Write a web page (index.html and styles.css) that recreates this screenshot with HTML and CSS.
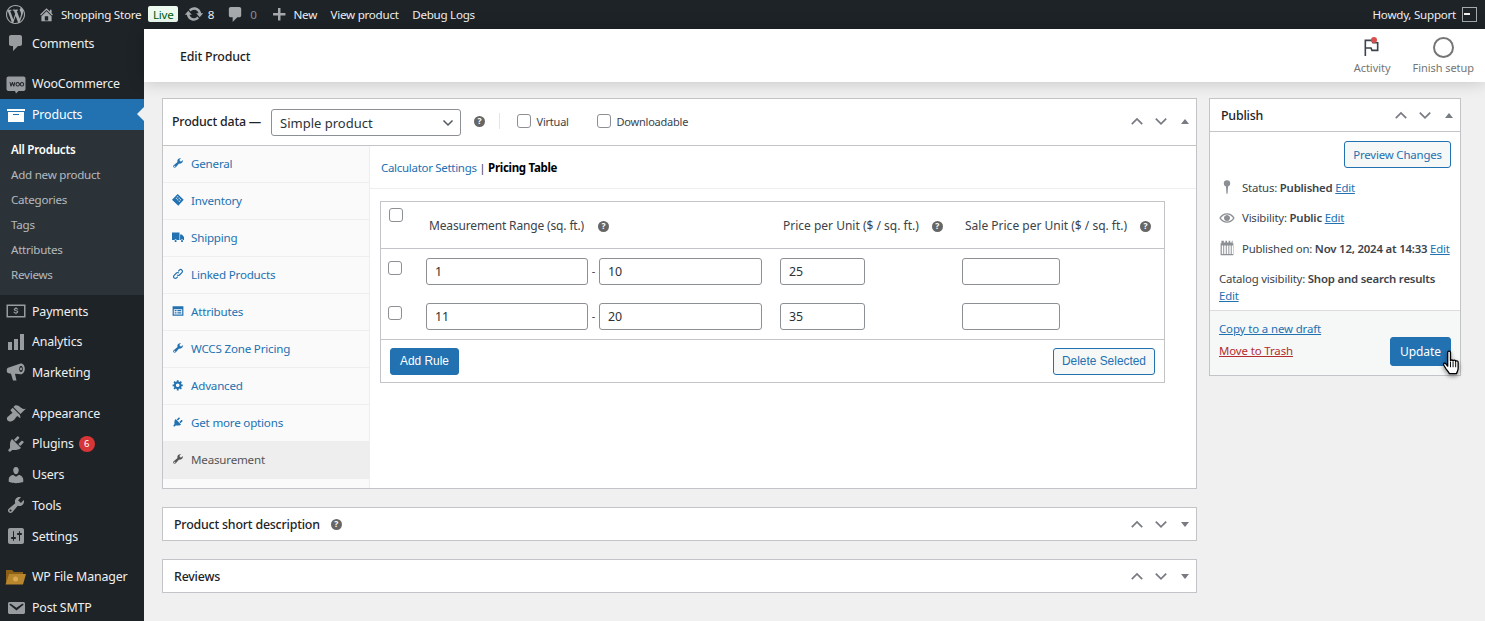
FILE: index.html
```html
<!DOCTYPE html>
<html lang="en">
<head>
<meta charset="utf-8">
<title>Edit Product</title>
<link rel="stylesheet" href="styles.css">
</head>
<body>
<svg class="defs" width="0" height="0" aria-hidden="true">
  <defs>
    <symbol id="i-wp" viewBox="0 0 20 20"><path d="M20 10c0-5.51-4.49-10-10-10C4.48 0 0 4.49 0 10c0 5.52 4.48 10 10 10 5.51 0 10-4.48 10-10zM7.78 15.37L4.37 6.22c.55-.02 1.17-.08 1.17-.08.5-.06.44-1.13-.06-1.11 0 0-1.45.11-2.37.11-.18 0-.37 0-.58-.01C4.12 2.69 6.87 1.11 10 1.11c2.33 0 4.45.87 6.05 2.34-.68-.11-1.65.39-1.65 1.58 0 .74.45 1.36.9 2.1.35.61.55 1.36.55 2.46 0 1.49-1.4 5-1.4 5l-3.03-8.37c.54-.02.82-.17.82-.17.5-.05.44-1.25-.06-1.22 0 0-1.44.12-2.38.12-.87 0-2.33-.12-2.33-.12-.5-.03-.56 1.2-.06 1.22l.92.08 1.26 3.41zM17.41 10c.24-.64.74-1.87.43-4.25.7 1.29 1.05 2.71 1.05 4.25 0 3.29-1.73 6.24-4.4 7.78.97-2.59 1.94-5.2 2.92-7.78zM6.1 18.09C3.12 16.65 1.11 13.53 1.11 10c0-1.3.23-2.48.72-3.59C3.25 10.3 4.67 14.2 6.1 18.09zm4.03-6.63l2.58 6.98c-.86.29-1.76.45-2.71.45-.79 0-1.57-.11-2.29-.33.81-2.38 1.62-4.74 2.42-7.1z"/></symbol>
    <symbol id="i-home" viewBox="0 0 20 20"><path d="M16 8.5l1.53 1.53-1.06 1.06L10 4.62l-6.47 6.47-1.06-1.06L10 2.5l4 4v-2h2v4zm-6-2.46l6 5.99V18H4v-5.97zM12 17v-5H8v5h4z"/></symbol>
    <symbol id="i-update" viewBox="0 0 20 20"><path d="M10.2 3.28c3.53 0 6.43 2.61 6.92 6h2.08l-3.5 4-3.5-4h2.32c-.45-1.97-2.21-3.45-4.32-3.45-1.45 0-2.73.71-3.54 1.78L4.95 5.66C6.23 4.2 8.11 3.28 10.2 3.28zm-.4 13.44c-3.52 0-6.43-2.61-6.92-6H.8l3.5-4c1.17 1.33 2.33 2.67 3.5 4H5.48c.45 1.97 2.21 3.45 4.32 3.45 1.45 0 2.73-.71 3.54-1.78l1.71 1.95c-1.28 1.46-3.15 2.38-5.25 2.38z"/></symbol>
    <symbol id="i-comment" viewBox="0 0 20 20"><path d="M5 2h9c1.1 0 2 .9 2 2v7c0 1.1-.9 2-2 2h-2l-5 5v-5H5c-1.1 0-2-.9-2-2V4c0-1.1.9-2 2-2z"/></symbol>
    <symbol id="i-plus" viewBox="0 0 20 20"><path d="M17.500 8.500v3h-6v6h-3v-6h-6v-3h6v-6h3v6z"/></symbol>
    <symbol id="i-woo" viewBox="0 0 20 20"><path d="M2.5 2.5h15c1.1 0 2 .9 2 2v10.500c0 1.100-.9 2-2 2h-5l-2.500 2.500-1-2.500h-6.500c-1.100 0-2-.9-2-2v-10.500c0-1.100.9-2 2-2zM3.500 8l1 4.500h.9l1-2.500 1 2.500h.9l1-4.500h-.9l-.6 2.800-1-2.800h-.8l-1 2.800-.6-2.800zM11.700 8.100a2.200 2.200 0 1 0 .01 0zm0 1a1.200 1.200 0 1 1-.01 0zM16 8.100a2.200 2.200 0 1 0 .01 0zm0 1a1.200 1.200 0 1 1-.01 0z" fill-rule="evenodd"/></symbol>
    <symbol id="i-archive" viewBox="0 0 20 20"><path d="M19 4v2H1V4h18zM2 7h16v10H2V7zm11 3V9H7v1h6z"/></symbol>
    <symbol id="i-money" viewBox="0 0 20 20"><path fill-rule="evenodd" d="M.500 3.500h19v13h-19zM2 5v10h16V5z"/><path d="M10.500 6.200v.8c1 .1 1.700.7 1.800 1.500h-1.100c-.1-.4-.5-.6-1.100-.6-.6 0-1 .2-1 .6 0 .3.300.5 1.100.65 1.300.25 2.100.7 2.100 1.650 0 .9-.8 1.450-1.800 1.550v.9H9.400v-.9c-1.100-.1-1.900-.7-2-1.650h1.100c.1.500.6.750 1.300.75.700 0 1.100-.25 1.100-.65 0-.35-.3-.55-1.100-.7-1.300-.25-2.100-.7-2.100-1.600 0-.9.800-1.450 1.700-1.550v-.8z"/></symbol>
    <symbol id="i-bars" viewBox="0 0 20 20"><path d="M18 18V2h-4v16h4zm-6 0V7H8v11h4zm-6 0v-8H2v8h4z"/></symbol>
    <symbol id="i-mega" viewBox="0 0 20 20"><path fill-rule="evenodd" d="M14.500 1.500c2.700-.3 4.300 2.300 4.300 5.300s-1.700 5.700-4.300 5.500l-5-.6-.5.3 1.500 6.500H7l-2-6.800-2.200-.4C1.500 11 .8 10.300.8 9V7.800c0-1.100.8-2 2-2.200zM15 3.800c-1.100 0-1.800 1.400-1.800 3.100s.7 3.100 1.800 3.100 1.800-1.400 1.800-3.100-.7-3.100-1.800-3.100zm0 1.800c.6 0 1 .6 1 1.300s-.4 1.300-1 1.300-1-.6-1-1.300.4-1.300 1-1.300z"/></symbol>
    <symbol id="i-brush" viewBox="0 0 20 20"><path d="M14.480 11.060L7.410 3.990l1.500-1.500c.5-.56 2.300-.47 3.510.32 1.210.8 1.430 1.280 2.910 2.100 1.180.64 2.450 1.260 4.450.85zm-.71.710L6.700 4.700 4.930 6.470c-.39.39-.39 1.020 0 1.410l1.060 1.060c.39.39.39 1.030 0 1.420-.6.6-1.430 1.110-2.210 1.690-.35.260-.7.530-1.010.84C1.430 13.230.6 15.060 1 16.500c.27.92 1.620 1.840 2.540 1.980 1.400.21 3.300-.41 4.640-1.750.31-.31.58-.66.84-1.010.58-.78 1.090-1.610 1.690-2.210.39-.39 1.030-.39 1.420 0l1.060 1.060c.39.39 1.020.39 1.410 0z"/></symbol>
    <symbol id="i-plug" viewBox="0 0 20 20"><path d="M13.110 4.360L9.870 7.600 8 5.730l3.240-3.240c.35-.34 1.050-.2 1.560.32.52.51.66 1.210.31 1.550zm-8 1.770l.91-1.120 9.010 9.010-1.190.84c-.71.71-2.630 1.160-3.820 1.160H6.140L4.900 17.260c-.59.59-1.540.59-2.120 0-.59-.58-.59-1.530 0-2.120l1.240-1.240v-3.880c0-1.130.4-3.190 1.090-3.890zm7.260 3.970l3.240-3.240c.34-.35 1.040-.21 1.550.31.52.51.66 1.210.31 1.550l-3.240 3.250z"/></symbol>
    <symbol id="i-user" viewBox="0 0 20 20"><path d="M10 9.250c-2.270 0-2.730-3.440-2.730-3.440C7 4.020 7.820 2 9.970 2c2.160 0 2.980 2.020 2.710 3.810 0 0-.41 3.440-2.68 3.440zm0 2.570L12.720 10c2.390 0 4.520 2.330 4.520 4.530v2.490s-3.650 1.130-7.240 1.130c-3.650 0-7.240-1.130-7.240-1.130v-2.490c0-2.250 1.940-4.480 4.470-4.480z"/></symbol>
    <symbol id="i-wrench" viewBox="0 0 20 20"><path d="M16.680 9.770c-1.340 1.340-3.300 1.670-4.950.99l-5.410 6.520c-.99.99-2.590.99-3.580 0s-.99-2.590 0-3.570l6.520-5.420c-.68-1.650-.35-3.610.99-4.950 1.280-1.280 3.120-1.620 4.720-1.060l-2.890 2.890 2.820 2.820 2.860-2.870c.53 1.580.18 3.390-1.080 4.650zM3.810 16.210c.4.390 1.040.39 1.430 0 .4-.4.4-1.040 0-1.430-.39-.4-1.030-.4-1.430 0-.39.39-.39 1.030 0 1.430z"/></symbol>
    <symbol id="i-sliders" viewBox="0 0 20 20"><path d="M18 16V4c0-1.100-.9-2-2-2H4c-1.100 0-2 .9-2 2v12c0 1.100.9 2 2 2h12c1.100 0 2-.9 2-2zM8 11h1c.55 0 1 .45 1 1s-.45 1-1 1H8v1.500c0 .28-.22.5-.5.5s-.5-.22-.5-.5V13H6c-.55 0-1-.45-1-1s.45-1 1-1h1V5.500c0-.28.22-.5.5-.5s.5.22.5.5V11zm5-2h-1c-.55 0-1-.45-1-1s.45-1 1-1h1V5.500c0-.28.22-.5.5-.5s.5.22.5.5V7h1c.55 0 1 .45 1 1s-.45 1-1 1h-1v5.500c0 .28-.22.5-.5.5s-.5-.22-.5-.5V9z"/></symbol>
    <symbol id="i-mail" viewBox="0 0 20 20"><path d="M3.870 4h13.250C18.370 4 19 4.590 19 5.790v8.420c0 1.190-.63 1.790-1.880 1.790H3.870c-1.250 0-1.880-.6-1.880-1.790V5.790c0-1.200.63-1.790 1.880-1.790zm6.620 8.600l6.740-5.530c.24-.2.430-.66.130-1.070-.29-.41-.82-.42-1.170-.17l-5.700 3.860L4.800 5.830c-.35-.25-.88-.24-1.170.17-.3.41-.11.87.13 1.070z"/></symbol>
    <symbol id="i-box" viewBox="0 0 20 20"><path fill-rule="evenodd" d="M9.500 0l10 9.500-9 10L0 9.500zM9.400 3.500l-1 1 1.400 1.400 1-1zM7 6l-1 1 1.400 1.400 1-1zM11.800 6l-1 1 1.400 1.400 1-1zM9.400 8.400l-1 1 1.400 1.400 1-1zM14.200 8.400l-1 1 1.400 1.400 1-1zM11.800 10.800l-1 1 1.400 1.400 1-1z"/></symbol>
    <symbol id="i-truck" viewBox="0 0 20 20"><path d="M0 2.500h12.500V15H8a2.400 2.400 0 0 0-4 0H0zM13.500 6h3l3.500 4v5h-1.300a2.400 2.400 0 0 0-4 0h-1.200zM6 14.800a1.800 1.800 0 1 1-.01 0zM16.700 14.800a1.800 1.800 0 1 1-.01 0z"/></symbol>
    <symbol id="i-link" viewBox="0 0 20 20"><path fill="none" stroke="currentColor" stroke-width="2" d="M8.500 11.500c1.500 1.500 3 1.200 4 .2l4-4c1.200-1.200 1.200-3 0-4.200s-3-1.200-4.200 0l-2 2M11.500 8.500c-1.500-1.500-3-1.200-4-.2l-4 4c-1.200 1.200-1.200 3 0 4.200s3 1.200 4.200 0l2-2"/></symbol>
    <symbol id="i-list" viewBox="0 0 20 20"><path fill-rule="evenodd" d="M1 2h18v16H1zM3 7v9h14V7zM4.500 8.500h3v2h-3zM9 8.500h6.500v2H9zM4.500 12h3v2h-3zM9 12h6.500v2H9z"/></symbol>
    <symbol id="i-gear" viewBox="0 0 20 20"><path fill-rule="evenodd" d="M18 12h-2.180c-.17.7-.44 1.350-.81 1.930l1.540 1.540-2.100 2.100-1.540-1.540c-.58.36-1.230.63-1.910.79V19H8v-2.180c-.68-.16-1.330-.43-1.910-.79l-1.540 1.540-2.120-2.120 1.540-1.540c-.36-.58-.63-1.230-.79-1.910H1V9.030h2.170c.16-.7.44-1.350.8-1.940L2.430 5.550l2.100-2.100 1.540 1.540c.58-.37 1.240-.64 1.930-.81V2h3v2.180c.68.160 1.330.43 1.910.79l1.540-1.540 2.120 2.120-1.540 1.540c.36.590.64 1.240.8 1.940H18V12zm-8.500 1.500c1.660 0 3-1.340 3-3s-1.340-3-3-3-3 1.340-3 3 1.340 3 3 3z"/></symbol>
    <symbol id="i-up" viewBox="0 0 20 20"><path fill="none" stroke="currentColor" stroke-width="2.200" d="M3.500 14L10 7.500 16.500 14"/></symbol>
    <symbol id="i-down" viewBox="0 0 20 20"><path fill="none" stroke="currentColor" stroke-width="2.200" d="M3.500 7L10 13.500 16.500 7"/></symbol>
    <symbol id="i-chev" viewBox="0 0 16 16"><path fill="none" stroke="currentColor" stroke-width="1.500" d="M3.500 5.500L8 10l4.500-4.500"/></symbol>
    <symbol id="i-pin" viewBox="0 0 20 20"><path d="M10 1.500a4 4 0 0 1 4 4c0 1.800-1.200 3.300-2.700 3.800L10.700 18.500H9.300L8.700 9.300C7.200 8.800 6 7.300 6 5.500a4 4 0 0 1 4-4z"/></symbol>
    <symbol id="i-eye" viewBox="0 0 20 20"><path fill-rule="evenodd" d="M10 4c4.200 0 7.700 2.500 9.600 6-1.900 3.500-5.400 6-9.600 6S2.300 13.500.4 10C2.300 6.500 5.800 4 10 4zM10 5.500c-3.200 0-5.900 1.800-7.700 4.500 1.800 2.700 4.500 4.500 7.700 4.500s5.900-1.800 7.700-4.500C15.900 7.300 13.200 5.500 10 5.500zM10 6.200a3.800 3.800 0 1 1-.01 0z"/></symbol>
    <symbol id="i-cal" viewBox="0 0 20 20"><path fill-rule="evenodd" d="M4 1h2v2h2V1h2v2h2V1h2v2h2V1h1v3h1v15H2V4h1V1zM3.500 7v10.500h1.800V7zm3 0v10.500h2V7zm3.200 0v10.500h2V7zm3.200 0v10.500h1.800V7zm3 0v10.500h1.600V7z"/></symbol>
    <symbol id="i-flag" viewBox="0 0 20 20"><path fill="none" stroke="currentColor" stroke-width="1.700" d="M3.500 19V2.500h7l1 2.500h5v8h-6l-1-2.500h-6"/></symbol>
  </defs>
</svg>

<div class="page">
  <header class="adminbar">
    <svg class="bar-logo"><use href="#i-wp"/></svg>
    <svg class="bar-home"><use href="#i-home"/></svg>
    <span class="bar-site">Shopping Store</span>
    <span class="bar-live">Live</span>
    <svg class="bar-update"><use href="#i-update"/></svg>
    <span class="bar-count">8</span>
    <svg class="bar-comment"><use href="#i-comment"/></svg>
    <span class="bar-count bar-muted">0</span>
    <svg class="bar-plus"><use href="#i-plus"/></svg>
    <span class="bar-new">New</span>
    <span class="bar-link">View product</span>
    <span class="bar-link">Debug Logs</span>
    <span class="bar-howdy">Howdy, Support</span>
    <span class="bar-avatar"><span class="bar-avatar-mark"></span></span>
  </header>

  <div class="shell">
    <nav class="sidebar">
      <a class="menu-item menu-first"><svg class="menu-icon"><use href="#i-comment"/></svg>Comments</a>
      <div class="menu-sep"></div>
      <a class="menu-item"><svg class="menu-icon"><use href="#i-woo"/></svg>WooCommerce</a>
      <a class="menu-item menu-current"><svg class="menu-icon"><use href="#i-archive"/></svg>Products</a>
      <div class="submenu">
        <a class="sub-item sub-current">All Products</a>
        <a class="sub-item">Add new product</a>
        <a class="sub-item">Categories</a>
        <a class="sub-item">Tags</a>
        <a class="sub-item">Attributes</a>
        <a class="sub-item">Reviews</a>
      </div>
      <a class="menu-item"><svg class="menu-icon"><use href="#i-money"/></svg>Payments</a>
      <a class="menu-item"><svg class="menu-icon"><use href="#i-bars"/></svg>Analytics</a>
      <a class="menu-item"><svg class="menu-icon"><use href="#i-mega"/></svg>Marketing</a>
      <div class="menu-sep"></div>
      <a class="menu-item"><svg class="menu-icon"><use href="#i-brush"/></svg>Appearance</a>
      <a class="menu-item"><svg class="menu-icon"><use href="#i-plug"/></svg>Plugins<span class="menu-badge">6</span></a>
      <a class="menu-item"><svg class="menu-icon"><use href="#i-user"/></svg>Users</a>
      <a class="menu-item"><svg class="menu-icon"><use href="#i-wrench"/></svg>Tools</a>
      <a class="menu-item"><svg class="menu-icon"><use href="#i-sliders"/></svg>Settings</a>
      <div class="menu-sep"></div>
      <a class="menu-item">
        <svg class="menu-icon menu-folder" viewBox="0 0 21 16"><path fill="#8a5f16" d="M1 1h6l2 2h9v3H4L1 15z"/><path fill="#b8862c" d="M4 5h17l-3 10.500H0.500z"/><circle cx="10.500" cy="10" r="2.500" fill="#d8a94e"/></svg>
        WP File Manager
      </a>
      <a class="menu-item"><svg class="menu-icon"><use href="#i-mail"/></svg>Post SMTP</a>
    </nav>

    <div class="workspace">
      <div class="pagehead">
        <h1 class="pagehead-title">Edit Product</h1>
        <div class="pagehead-actions">
          <div class="head-action head-activity">
            <span class="head-icon"><svg class="flag"><use href="#i-flag"/></svg><span class="flag-dot"></span></span>
            <span class="head-label">Activity</span>
          </div>
          <div class="head-action head-setup">
            <span class="head-icon"><span class="setup-ring"></span></span>
            <span class="head-label">Finish setup</span>
          </div>
        </div>
      </div>

      <main class="content">
        <div class="col-main">
          <section class="box">
            <div class="data-head">
              <span class="data-title">Product data —</span>
              <span class="select-wrap">
                <select class="type-select"><option>Simple product</option></select>
                <svg class="select-chev"><use href="#i-chev"/></svg>
              </span>
              <span class="help help-type">?</span>
              <span class="head-div"></span>
              <label class="check-label check-virtual"><input type="checkbox" class="check">Virtual</label>
              <label class="check-label"><input type="checkbox" class="check">Downloadable</label>
              <span class="handles">
                <svg class="handle"><use href="#i-up"/></svg>
                <svg class="handle"><use href="#i-down"/></svg>
                <span class="tri tri-up"></span>
              </span>
            </div>
            <div class="data-body">
              <ul class="tabs">
                <li class="tab"><svg class="tab-icon"><use href="#i-wrench"/></svg>General</li>
                <li class="tab"><svg class="tab-icon"><use href="#i-box"/></svg>Inventory</li>
                <li class="tab"><svg class="tab-icon"><use href="#i-truck"/></svg>Shipping</li>
                <li class="tab"><svg class="tab-icon"><use href="#i-link"/></svg>Linked Products</li>
                <li class="tab"><svg class="tab-icon"><use href="#i-list"/></svg>Attributes</li>
                <li class="tab"><svg class="tab-icon"><use href="#i-wrench"/></svg>WCCS Zone Pricing</li>
                <li class="tab"><svg class="tab-icon"><use href="#i-gear"/></svg>Advanced</li>
                <li class="tab"><svg class="tab-icon"><use href="#i-plug"/></svg>Get more options</li>
                <li class="tab tab-active"><svg class="tab-icon"><use href="#i-wrench"/></svg>Measurement</li>
              </ul>
              <div class="panel">
                <div class="panel-nav"><a class="panel-link">Calculator Settings</a> | <strong class="panel-strong">Pricing Table</strong></div>
                <div class="rules">
                  <div class="rules-row rules-head">
                    <input type="checkbox" class="check check-head">
                    <span class="rule-th rule-th-range">Measurement Range (sq. ft.)<span class="help help-th">?</span></span>
                    <span class="rule-th">Price per Unit ($ / sq. ft.)<span class="help help-th">?</span></span>
                    <span class="rule-th">Sale Price per Unit ($ / sq. ft.)<span class="help help-th">?</span></span>
                  </div>
                  <div class="rules-body">
                    <div class="rules-row">
                      <input type="checkbox" class="check check-row">
                      <span class="range"><input class="field field-range" value="1"><span class="dash">-</span><input class="field field-range" value="10"></span>
                      <input class="field field-price" value="25">
                      <input class="field field-sale" value="">
                    </div>
                    <div class="rules-row">
                      <input type="checkbox" class="check check-row">
                      <span class="range"><input class="field field-range" value="11"><span class="dash">-</span><input class="field field-range" value="20"></span>
                      <input class="field field-price" value="35">
                      <input class="field field-sale" value="">
                    </div>
                  </div>
                  <div class="rules-foot">
                    <button class="btn btn-rule btn-solid">Add Rule</button>
                    <button class="btn btn-rule btn-outline">Delete Selected</button>
                  </div>
                </div>
              </div>
            </div>
          </section>

          <section class="box box-closed">
            <h2 class="closed-title">Product short description<span class="help help-closed">?</span></h2>
            <span class="handles">
              <svg class="handle"><use href="#i-up"/></svg>
              <svg class="handle"><use href="#i-down"/></svg>
              <span class="tri tri-down"></span>
            </span>
          </section>
          <section class="box box-closed">
            <h2 class="closed-title">Reviews</h2>
            <span class="handles">
              <svg class="handle"><use href="#i-up"/></svg>
              <svg class="handle"><use href="#i-down"/></svg>
              <span class="tri tri-down"></span>
            </span>
          </section>
        </div>

        <aside class="col-side">
          <section class="box publish">
            <div class="publish-head">
              <h2 class="publish-title">Publish</h2>
              <span class="handles">
                <svg class="handle"><use href="#i-up"/></svg>
                <svg class="handle"><use href="#i-down"/></svg>
                <span class="tri tri-up"></span>
              </span>
            </div>
            <div class="publish-body">
              <div class="preview-row"><button class="btn btn-outline btn-preview">Preview Changes</button></div>
              <div class="pub-line"><svg class="pub-icon"><use href="#i-pin"/></svg>Status:&nbsp;<b class="pub-b">Published</b>&nbsp;<a class="pub-edit">Edit</a></div>
              <div class="pub-line"><svg class="pub-icon"><use href="#i-eye"/></svg>Visibility:&nbsp;<b class="pub-b">Public</b>&nbsp;<a class="pub-edit">Edit</a></div>
              <div class="pub-line"><svg class="pub-icon"><use href="#i-cal"/></svg>Published on:&nbsp;<b class="pub-b">Nov 12, 2024 at 14:33</b>&nbsp;<a class="pub-edit">Edit</a></div>
              <div class="pub-catalog">Catalog visibility: <b class="pub-b">Shop and search results</b><br><a class="pub-edit">Edit</a></div>
            </div>
            <div class="publish-foot">
              <div class="foot-links">
                <a class="pub-edit">Copy to a new draft</a>
                <a class="trash">Move to Trash</a>
              </div>
              <button class="btn btn-solid btn-update">Update</button>
            </div>
            <svg class="cursor" viewBox="0 0 20 26"><path fill="#fff" stroke="#000" stroke-width="1.200" stroke-linejoin="round" d="M6 2.200c0-1.600 2.600-1.600 2.600 0V10c0-1 2.400-1 2.400.2 0-1 2.400-1 2.400.4.2-.9 2.300-.7 2.300.8v5.600c0 2.500-1.100 3.600-1.600 5H7.600c-.8-1.700-2.200-3-3.700-5.300-.7-1.100-2.100-3-1.800-3.800.4-1 1.500-.8 2.400.2L6 15z"/><path stroke="#000" stroke-width=".9" d="M8.600 11v5M11 11v5M13.400 11v5"/></svg>
          </section>
        </aside>
      </main>
    </div>
  </div>
</div>
</body>
</html>
```

FILE: styles.css
```css
* { box-sizing: border-box; }
html, body { margin: 0; padding: 0; height: 100%; overflow: hidden; }
body { font-family: "Noto Sans", "Open Sans", sans-serif; font-size: 12.4px; color: #3c434a; background: #f0f0f1; }
.defs { position: absolute; }
svg { fill: currentColor; display: block; flex: none; }
a { color: #2271b1; text-decoration: none; }
h1, h2 { margin: 0; font-size: inherit; }
ul { margin: 0; padding: 0; list-style: none; }
button, input, select { font-family: inherit; font-size: inherit; }

.page { height: 621px; display: flex; flex-direction: column; overflow: hidden; }

/* admin bar */
.adminbar { height: 29px; flex: none; display: flex; align-items: center; background: #1d2327; color: #f0f0f1; font-size: 11.6px; letter-spacing: -.25px; padding: 0 8px 1px 6px; }
.adminbar svg { color: #a7aaad; }
.bar-logo { width: 19px; height: 19px; }
.bar-home { width: 17px; height: 17px; margin-left: 13px; }
.bar-site { margin-left: 6px; }
.bar-live { margin-left: 7px; height: 16px; width: 30px; display: flex; align-items: center; justify-content: center; background: #edfaef; color: #005c12; border-radius: 2px; }
.bar-update { width: 20px; height: 20px; margin-left: 6px; }
.bar-count { margin-left: 3.500px; }
.bar-muted { color: #8c8f94; margin-left: 5px; }
.bar-comment { width: 19px; height: 19px; margin-left: 12px; }
.bar-plus { width: 16.500px; height: 16.500px; margin-left: 14px; }
.bar-new { margin-left: 6.500px; }
.bar-link { margin-left: 13.500px; }
.bar-howdy { margin-left: auto; }
.bar-avatar { margin-left: 6px; width: 15px; height: 15px; border: 1px solid #a7aaad; background: #1d2327; display: flex; align-items: center; padding-left: 1px; }
.bar-avatar-mark { width: 6px; height: 2px; background: #f0f0f1; }

.shell { flex: 1; display: flex; min-height: 0; }

/* sidebar */
.sidebar { width: 144px; flex: none; background: #1d2327; color: #f0f0f1; overflow: hidden; display: flex; flex-direction: column; letter-spacing: -.15px; }
.menu-item { height: 30.700px; flex: none; display: flex; align-items: center; color: #f0f0f1; padding-left: 6px; position: relative; }
.menu-first { margin-top: -1.300px; }
.menu-icon { width: 20px; height: 20px; color: #a7aaad; margin-right: 6px; opacity: .9; }
.menu-folder { width: 21px; height: 16px; margin-right: 6px; margin-left: -1px; opacity: 1; }
.menu-sep { height: 10.200px; flex: none; }
.menu-current { background: #2271b1; color: #fff; height: 31px; }
.menu-current .menu-icon { color: #fff; opacity: 1; }
.menu-current::after { content: ""; position: absolute; right: 0; top: 8px; border: 7.500px solid transparent; border-right-color: #f0f0f1; border-left-width: 0; }
.submenu { background: #2c3338; padding: 6.200px 0 0; height: 165px; flex: none; margin-bottom: .4px; }
.sub-item { display: flex; align-items: center; height: 25.200px; padding-left: 11px; color: rgba(240,246,252,.7); font-size: 11.600px; letter-spacing: -.25px; }
.sub-current { color: #fff; font-weight: 600; }
.menu-badge { margin-left: 5px; width: 16px; height: 16px; border-radius: 50%; background: #d63638; color: #fff; font-size: 9.500px; display: flex; align-items: center; justify-content: center; }

/* workspace */
.workspace { flex: 1; min-width: 0; display: flex; flex-direction: column; }
.pagehead { height: 53px; flex: none; background: #fff; display: flex; align-items: center; justify-content: space-between; padding: 0 11px 0 36px; box-shadow: 0 0 16px rgba(0,0,0,.2); position: relative; }
.pagehead-title { font-size: 12.400px; font-weight: 500; color: #1e1e1e; letter-spacing: -.17px; margin-top: 2px; }
.pagehead-actions { display: flex; align-self: flex-start; padding-top: 8px; }
.head-action { display: flex; flex-direction: column; align-items: center; color: #757575; font-size: 11px; letter-spacing: -.05px; }
.head-setup { margin-left: 22px; }
.head-icon { height: 21px; position: relative; display: flex; align-items: center; }
.head-label { margin-top: 3px; line-height: 14px; }
.flag { width: 19px; height: 21px; color: #3c434a; margin-left: -1px; }
.flag-dot { position: absolute; top: 0; right: 4px; width: 6px; height: 6px; border-radius: 50%; background: #d94f4f; }
.setup-ring { width: 21px; height: 21px; border: 2px solid #757575; border-radius: 50%; }

.content { flex: 1; display: flex; align-items: flex-start; gap: 12px; padding: 16px 0 0 18px; min-height: 0; }
.col-main { width: 1035px; flex: none; display: flex; flex-direction: column; gap: 18px; }
.col-side { width: 252px; flex: none; }
.box { background: #fff; border: 1px solid #c3c4c7; }

/* product data */
.data-head { height: 47px; display: flex; align-items: center; padding: 0 0 0 9px; border-bottom: 1px solid #c3c4c7; }
.data-title { font-weight: 500; color: #1d2327; width: 99px; margin-top: -2px; letter-spacing: -.2px; }
.select-wrap { position: relative; display: block; width: 190px; height: 27px; }
.type-select { width: 100%; height: 100%; appearance: none; background: #fff; border: 1px solid #8c8f94; border-radius: 3px; padding: 2px 24px 0 8px; color: #2c3338; font-size: 13px; }
.select-chev { position: absolute; right: 5px; top: 6px; width: 16px; height: 16px; color: #50575e; pointer-events: none; }
.help { display: inline-flex; align-items: center; justify-content: center; width: 11px; height: 11px; border-radius: 50%; background: #666; color: #fff; font-size: 8.500px; font-weight: 700; line-height: 1; flex: none; letter-spacing: 0; }
.help-type { margin-left: 13px; margin-top: -2px; }
.head-div { width: 1px; height: 16px; background: #e5e5e5; margin: -2px 17px 0 14px; }
.check { appearance: none; width: 14px; height: 14px; margin: 0; background: #fff; border: 1px solid #8c8f94; border-radius: 3px; flex: none; }
.check-label { display: flex; align-items: center; gap: 5.500px; font-size: 11px; letter-spacing: -.22px; color: #3c434a; margin-top: -2px; }
.check-virtual { width: 80px; }
.handles { margin-left: auto; display: flex; align-items: center; color: #787c82; }
.handle { width: 16px; height: 16px; margin-right: 8px; }
.handle + .handle { margin-right: 12px; }
.tri { width: 0; height: 0; border: 4px solid transparent; margin: 0 7px 0 0; }
.tri-up { border-bottom: 5px solid #787c82; border-top-width: 0; }
.tri-down { border-top: 5px solid #787c82; border-bottom-width: 0; }
.data-head .handles { margin-top: -2px; }

.data-body { display: flex; height: 342px; }
.tabs { width: 207px; flex: none; background: #fafafa; border-right: 1px solid #eee; color: #2271b1; }
.tab { height: 37px; display: flex; align-items: center; padding: 0 0 1px 9px; border-bottom: 1px solid #eee; font-size: 11.600px; letter-spacing: -.2px; }
.tab-icon { width: 12px; height: 12px; margin-right: 7px; margin-top: -2px; margin-left: 0; }
.tab-active { background: #eee; color: #555; height: 38px; margin-top: -1px; border-bottom: 0; }
.panel { flex: 1; min-width: 0; }
.panel-nav { height: 43px; padding: 0 0 0 11px; display: flex; align-items: center; white-space: pre; border-bottom: 1px solid #eee; color: #3c434a; font-size: 11.500px; letter-spacing: -.3px; }
.panel-strong { font-weight: 700; color: #000; }
.rules { width: 785px; height: 182px; margin: 12px 0 0 10px; border: 1px solid #c3c4c7; display: flex; flex-direction: column; }
.rules-row { display: grid; grid-template-columns: 45px 354px 182px 1fr; align-items: center; }
.rules-head { height: 47px; border-bottom: 1px solid #c3c4c7; }
.check-head { margin: -20px 0 0 8px; }
.check-row { margin: -7px 0 0 7px; }
.rule-th { padding: 0 0 0 3px; display: flex; align-items: center; white-space: nowrap; font-size: 12px; color: #3c434a; }
.rule-th-range { letter-spacing: -.15px; }
.help-th { margin-left: 13px; margin-top: 3px; }
.rule-th-range .help-th { margin-left: 14px; }
.rules-body { flex: 1; display: flex; flex-direction: column; gap: 18px; padding: 9px 0 0; border-bottom: 1px solid #c3c4c7; }
.range { display: flex; align-items: center; }
.dash { width: 11px; text-align: center; font-size: 11px; margin-top: -2px; }
.field { height: 27px; border: 1px solid #8c8f94; border-radius: 3px; padding: 0 8px; color: #2c3338; background: #fff; font-size: 12.400px; display: block; }
.field-range { width: 162px; }
.field-range:last-child { width: 163px; }
.field-price { width: 85px; }
.field-sale { width: 98px; }
.rules-foot { height: 42px; flex: none; display: flex; justify-content: space-between; align-items: center; padding: 0 9px; }
.btn { height: 27px; border-radius: 3px; padding: 0; border: 1px solid #2271b1; cursor: pointer; display: block; }
.btn-rule { font-family: "Liberation Sans", Arial, sans-serif; font-size: 11.900px; }
.btn-solid { background: #2271b1; color: #fff; width: 69px; }
.btn-outline { background: #f6f7f7; color: #2271b1; width: 102px; }

/* closed boxes */
.box-closed { height: 34px; display: flex; align-items: center; padding-left: 11px; }
.closed-title { font-weight: 500; color: #1d2327; display: flex; align-items: center; font-size: 12.400px; letter-spacing: -.2px; }
.help-closed { margin-left: 11px; }

/* publish */
.publish { height: 278px; position: relative; display: flex; flex-direction: column; }
.publish-head { height: 33px; flex: none; display: flex; align-items: center; padding-left: 11px; border-bottom: 1px solid #c3c4c7; }
.publish-title { font-weight: 500; color: #1d2327; font-size: 12.400px; letter-spacing: -.2px; }
.publish-body { height: 178px; flex: none; padding: 9px 9px 0 9px; }
.preview-row { display: flex; justify-content: flex-end; }
.btn-preview { width: 107px; font-size: 11.400px; letter-spacing: -.15px; }
.pub-line { height: 30.500px; display: flex; align-items: center; white-space: nowrap; font-size: 11.400px; letter-spacing: -.2px; }
.pub-line:nth-child(2) { margin-top: 4px; }
.pub-icon { width: 16px; height: 16px; color: #8c8f94; margin-right: 7px; }
.pub-b { font-weight: 600; }
.pub-edit { text-decoration: underline; color: #2271b1; }
.pub-catalog { font-size: 11.400px; letter-spacing: -.2px; line-height: 17px; margin-top: 6px; }
.publish-foot { flex: 1; background: #f6f7f7; border-top: 1px solid #dcdcde; display: flex; justify-content: space-between; padding: 0 9px; position: relative; font-size: 11.400px; letter-spacing: -.1px; }
.foot-links { display: flex; flex-direction: column; gap: 7px; padding-top: 10px; }
.trash { color: #b32d2e; text-decoration: underline; }
.btn-update { width: 61px; height: 29px; margin-top: 26px; font-size: 12px; letter-spacing: -.1px; }
.cursor { position: absolute; left: 231px; top: 251px; width: 22px; height: 28px; filter: drop-shadow(0 2px 2px rgba(0,0,0,.45)); }
```
